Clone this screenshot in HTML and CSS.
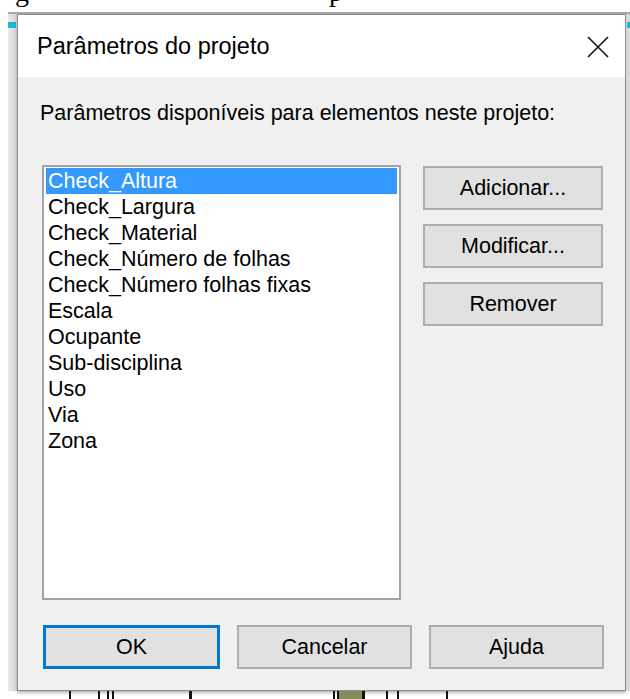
FILE: index.html
```html
<!DOCTYPE html>
<html lang="pt">
<head>
<meta charset="utf-8">
<title>Parâmetros do projeto</title>
<link rel="stylesheet" href="styles.css">
</head>
<body>
  <div class="doc-line">
    <div class="doc-text"><span class="g">g</span><span class="p">p</span></div>
  </div>

  <div class="window">
    <div class="band band-left"><span class="mark"></span></div>

    <div class="dialog">
      <div class="titlebar">
        <span class="title">Parâmetros do projeto</span>
        <svg class="close" width="22" height="22" viewBox="0 0 22 22" aria-label="Fechar">
          <path d="M1 1 L21 21 M21 1 L1 21" stroke="#111" stroke-width="1.6" fill="none"/>
        </svg>
      </div>

      <div class="content">
        <p class="label">Parâmetros disponíveis para elementos neste projeto:</p>

        <div class="main">
          <ul class="listbox">
            <li class="item selected">Check_Altura</li>
            <li class="item">Check_Largura</li>
            <li class="item">Check_Material</li>
            <li class="item">Check_Número de folhas</li>
            <li class="item">Check_Número folhas fixas</li>
            <li class="item">Escala</li>
            <li class="item">Ocupante</li>
            <li class="item">Sub-disciplina</li>
            <li class="item">Uso</li>
            <li class="item">Via</li>
            <li class="item">Zona</li>
          </ul>

          <div class="side">
            <button class="btn side-btn">Adicionar...</button>
            <button class="btn side-btn">Modificar...</button>
            <button class="btn side-btn">Remover</button>
          </div>
        </div>

        <div class="footer">
          <button class="btn foot-btn default">OK</button>
          <button class="btn foot-btn">Cancelar</button>
          <button class="btn foot-btn">Ajuda</button>
        </div>
      </div>
    </div>

    <div class="band band-right"><span class="mark"></span></div>
  </div>

  <svg class="drawing" width="630" height="9" viewBox="0 0 630 9">
    <rect x="69" y="0" width="2" height="9" fill="#111"/>
    <rect x="98" y="0" width="2" height="9" fill="#111"/>
    <rect x="107" y="0" width="2" height="9" fill="#111"/>
    <rect x="112" y="0" width="2" height="9" fill="#111"/>
    <rect x="189" y="0" width="3" height="9" fill="#111"/>
    <rect x="333" y="0" width="2" height="9" fill="#111"/>
    <rect x="337" y="0" width="2" height="9" fill="#111"/>
    <rect x="339" y="0" width="23" height="9" fill="#868b5c"/>
    <rect x="362" y="0" width="3" height="9" fill="#111"/>
    <rect x="386" y="0" width="2" height="9" fill="#111"/>
    <rect x="397" y="0" width="2" height="9" fill="#111"/>
    <rect x="446" y="0" width="2" height="9" fill="#111"/>
  </svg>
</body>
</html>
```

FILE: styles.css
```css
html, body {
  margin: 0;
  padding: 0;
}

body {
  width: 630px;
  height: 699px;
  overflow: hidden;
  background: #ffffff;
  font-family: "Liberation Sans", Arial, sans-serif;
  color: #000;
}

/* document text behind the window, only descenders peek out */
.doc-line {
  height: 12px;
  overflow: hidden;
}

.doc-text {
  margin-top: -22px;
  font-family: "Liberation Serif", "Times New Roman", serif;
  font-size: 28px;
  line-height: 28px;
  white-space: nowrap;
  display: flex;
}

.doc-text .g { margin-left: 15px; }
.doc-text .p { margin-left: 300px; }

/* application window frame */
.window {
  display: flex;
  margin-left: 8px;
  border-top: 2px solid #a8a8a8;
}

.band {
  display: flex;
  flex-direction: column;
}

.band-left {
  width: 9px;
  background: linear-gradient(to right, #e9e9e9, #d6d6d6);
}

.band-right {
  flex: 1;
  background: #d8d8d8;
  align-items: flex-end;
}

.mark {
  display: block;
  height: 6px;
  margin-top: 8px;
  background: #19b9cf;
}

.band-left .mark { width: 8px; }
.band-right .mark { width: 3px; }

/* dialog */
.dialog {
  width: 607px;
  border: 1px solid #8c8c8c;
  background: #f0f0f0;
  box-shadow: 0 2px 3px rgba(0, 0, 0, 0.28);
  display: flex;
  flex-direction: column;
}

.titlebar {
  height: 62px;
  background: #ffffff;
  display: flex;
  align-items: center;
  justify-content: space-between;
  padding: 0 16px 0 19px;
}

.title {
  font-size: 23.5px;
  line-height: 62px;
  white-space: nowrap;
}

.close {
  display: block;
  margin-top: 2px;
}

.content {
  padding: 0 21px 21px 24px;
  display: flex;
  flex-direction: column;
}

.label {
  margin: 23px 0 0 -2px;
  font-size: 21.5px;
  line-height: 26px;
  white-space: nowrap;
}

.main {
  display: flex;
  gap: 22px;
  margin-top: 39px;
}

.listbox {
  list-style: none;
  margin: 0;
  padding: 1px 2px;
  width: 359px;
  height: 435px;
  box-sizing: border-box;
  border: 2px solid #9fa2a8;
  background: #ffffff;
}

.item {
  height: 26px;
  line-height: 26px;
  padding-left: 2px;
  font-size: 21.5px;
  white-space: nowrap;
}

.item.selected {
  background: #3399ff;
  color: #ffffff;
}

.side {
  display: flex;
  flex-direction: column;
  gap: 14px;
  margin-top: 1px;
}

.btn {
  font-family: inherit;
  font-size: 21.5px;
  color: #000;
  background: #e1e1e1;
  border: 2px solid #adadad;
  border-radius: 0;
  padding: 0;
  margin: 0;
  height: 44px;
  box-sizing: border-box;
}

.side-btn {
  width: 180px;
}

.footer {
  display: flex;
  gap: 17px;
  margin-top: 25px;
  margin-left: 1px;
}

.foot-btn {
  flex: 1;
}

.foot-btn.default {
  border: 3px solid #0078d7;
}

.drawing {
  display: block;
}
```
